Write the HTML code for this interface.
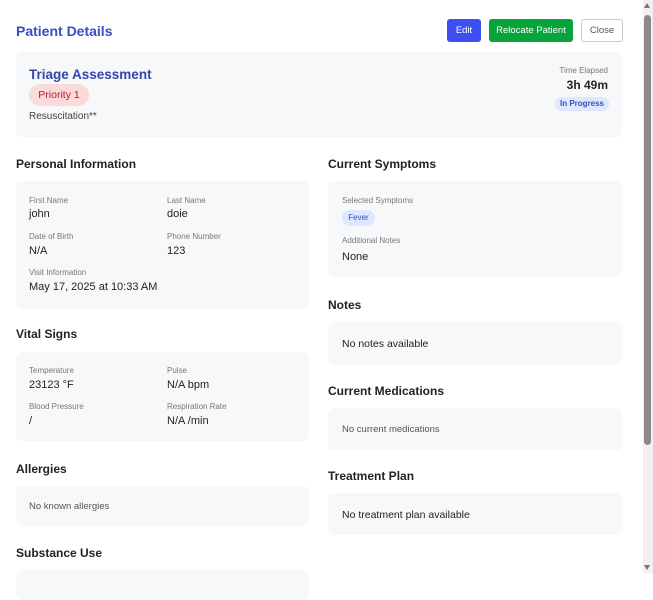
<!DOCTYPE html>
<html><head><meta charset="utf-8"><style>
*{margin:0;padding:0;box-sizing:border-box}
body{width:653px;height:573px;overflow:hidden;background:#fff;font-family:"Liberation Sans",sans-serif;color:#222;position:relative}
.a{position:absolute;line-height:1;white-space:nowrap}
.card{position:absolute;background:#f7f8fa;border-radius:6px}
.h{font-weight:bold;font-size:12px;color:#222}
.l{font-size:8px;color:#777}
.v{font-size:11px;color:#222}
.btn{position:absolute;border-radius:3px;font-size:9.5px;display:flex;align-items:center;justify-content:center}
</style></head><body>
<div class="a" style="left:16px;top:24px;font-size:14px;font-weight:bold;color:#3b4cc0">Patient Details</div>
<div class="btn" style="left:447px;top:19px;width:34px;height:23px;background:#3d4ef5;color:#fff">Edit</div>
<div class="btn" style="left:489px;top:19px;width:84px;height:23px;background:#08a33a;color:#fff">Relocate Patient</div>
<div class="btn" style="left:581px;top:19px;width:42px;height:23px;background:#fff;border:1px solid #ccc;color:#555">Close</div>

<div class="card" style="left:16px;top:52px;width:606px;height:85px"></div>
<div class="a" style="left:29px;top:68px;font-size:13.5px;font-weight:bold;color:#3345b0">Triage Assessment</div>
<div class="a" style="left:29px;top:84px;width:60px;height:22px;border-radius:11px;background:#fbdada;color:#a8202c;font-size:10.5px;line-height:22px;text-align:center">Priority 1</div>
<div class="a" style="left:29px;top:112px;font-size:10px;color:#444">Resuscitation**</div>
<div class="a" style="right:45px;top:67px;font-size:8px;color:#777">Time Elapsed</div>
<div class="a" style="right:45px;top:79px;font-size:12px;font-weight:bold;color:#222">3h 49m</div>
<div class="a" style="left:555px;top:97px;width:54px;height:14px;border-radius:7px;background:#dde7fd;color:#3b4cc0;font-size:8px;font-weight:bold;line-height:14px;text-align:center">In Progress</div>

<div class="a h" style="left:16px;top:158px">Personal Information</div>
<div class="card" style="left:16px;top:181px;width:293px;height:128px"></div>
<div class="a l" style="left:29px;top:197px">First Name</div><div class="a v" style="left:29px;top:209px">john</div>
<div class="a l" style="left:167px;top:197px">Last Name</div><div class="a v" style="left:167px;top:209px">doie</div>
<div class="a l" style="left:29px;top:233px">Date of Birth</div><div class="a v" style="left:29px;top:246px">N/A</div>
<div class="a l" style="left:167px;top:233px">Phone Number</div><div class="a v" style="left:167px;top:246px">123</div>
<div class="a l" style="left:29px;top:269px">Visit Information</div><div class="a v" style="left:29px;top:282px">May 17, 2025 at 10:33 AM</div>

<div class="a h" style="left:16px;top:328px">Vital Signs</div>
<div class="card" style="left:16px;top:352px;width:293px;height:89px"></div>
<div class="a l" style="left:29px;top:367px">Temperature</div><div class="a v" style="left:29px;top:380px">23123 °F</div>
<div class="a l" style="left:167px;top:367px">Pulse</div><div class="a v" style="left:167px;top:380px">N/A bpm</div>
<div class="a l" style="left:29px;top:403px">Blood Pressure</div><div class="a v" style="left:29px;top:416px">/</div>
<div class="a l" style="left:167px;top:403px">Respiration Rate</div><div class="a v" style="left:167px;top:416px">N/A /min</div>

<div class="a h" style="left:16px;top:463px">Allergies</div>
<div class="card" style="left:16px;top:486px;width:293px;height:40px"></div>
<div class="a" style="left:29px;top:502px;font-size:9.5px;color:#555">No known allergies</div>

<div class="a h" style="left:16px;top:547px">Substance Use</div>
<div class="card" style="left:16px;top:570px;width:293px;height:30px"></div>

<div class="a h" style="left:328px;top:158px">Current Symptoms</div>
<div class="card" style="left:328px;top:181px;width:294px;height:96px"></div>
<div class="a l" style="left:342px;top:197px">Selected Symptoms</div>
<div class="a" style="left:342px;top:210px;width:33px;height:16px;border-radius:8px;background:#dde7fd;color:#3b4cc0;font-size:8px;line-height:16px;text-align:center">Fever</div>
<div class="a l" style="left:342px;top:237px">Additional Notes</div>
<div class="a v" style="left:342px;top:252px">None</div>

<div class="a h" style="left:328px;top:299px">Notes</div>
<div class="card" style="left:328px;top:322px;width:294px;height:43px"></div>
<div class="a" style="left:342px;top:339px;font-size:10.5px;color:#222">No notes available</div>

<div class="a h" style="left:328px;top:385px">Current Medications</div>
<div class="card" style="left:328px;top:408px;width:294px;height:42px"></div>
<div class="a" style="left:342px;top:425px;font-size:9.5px;color:#555">No current medications</div>

<div class="a h" style="left:328px;top:470px">Treatment Plan</div>
<div class="card" style="left:328px;top:493px;width:294px;height:42px"></div>
<div class="a" style="left:342px;top:510px;font-size:10.5px;color:#222">No treatment plan available</div>

<div style="position:absolute;left:643px;top:0;width:10px;height:573px;background:#f1f1f1"></div>
<div style="position:absolute;left:644px;top:15px;width:7px;height:430px;background:#8a8a8a;border-radius:4px"></div>
<div style="position:absolute;left:644px;top:3px;width:0;height:0;border-left:3.5px solid transparent;border-right:3.5px solid transparent;border-bottom:5px solid #777"></div>
<div style="position:absolute;left:644px;top:565px;width:0;height:0;border-left:3.5px solid transparent;border-right:3.5px solid transparent;border-top:5px solid #777"></div>
</body></html>
